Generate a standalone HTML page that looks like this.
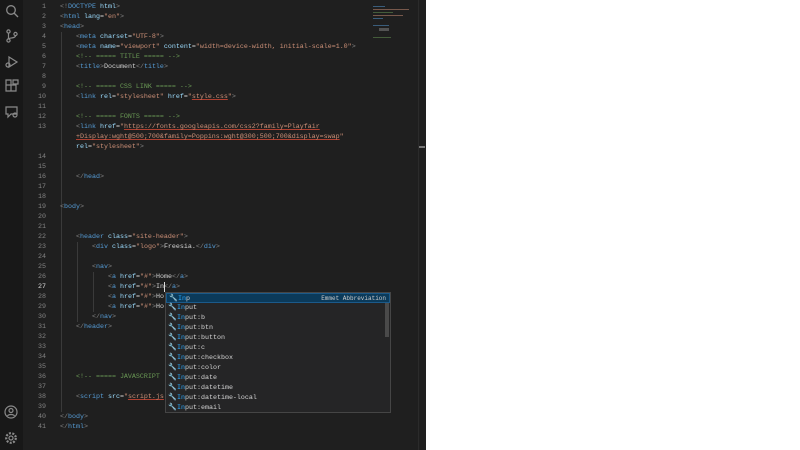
<!DOCTYPE html>
<html><head><meta charset="utf-8"><style>
*{margin:0;padding:0;box-sizing:border-box}
body{width:800px;height:450px;background:#1f1f1f;overflow:hidden;position:relative;font-family:"Liberation Mono",monospace;font-size:6.67px;color:#d4d4d4}
#side{position:absolute;left:0;top:0;width:23px;height:450px;background:#181818}
#right{position:absolute;left:426px;top:0;width:374px;height:450px;background:#fff}
#ln{position:absolute;left:22px;top:0;width:24px;text-align:right;color:#858585}
.l{position:absolute;height:10px;line-height:10px;white-space:pre;margin-top:1px}
.n{right:0}
.t{color:#569cd6}.p{color:#808080}.a{color:#9cdcfe}.s{color:#ce9178}.c{color:#6a9955}.w{color:#d4d4d4}
.u{text-decoration:underline;text-decoration-color:#b04030}
.g{position:absolute;width:1px;background:#3a3a3a}
#sug{position:absolute;left:165px;top:292px;width:226px;height:121px;background:#252526;border:1px solid #454545}
.si{position:absolute;left:0;width:216px;height:10px;line-height:10px;padding-left:11px;white-space:pre;color:#d4d4d4}
.si b{color:#2aaaff;font-weight:normal}
.ic{position:absolute;left:2px;top:1px;width:7px;height:8px;color:#c5c5c5;font-size:7px;line-height:8px}
svg{position:absolute}
</style></head><body>
<div id="side">
<svg style="left:5px;top:4px" width="14" height="14" viewBox="0 0 14 14" fill="none" stroke="#8a8a8a" stroke-width="1.3"><circle cx="6" cy="6" r="4.3"/><path d="M9 9l4 4"/></svg>
<svg style="left:5px;top:29px" width="14" height="14" viewBox="0 0 14 14" fill="none" stroke="#8a8a8a" stroke-width="1.2"><circle cx="3.5" cy="2.5" r="1.6"/><circle cx="3.5" cy="11.5" r="1.6"/><circle cx="10.5" cy="5" r="1.6"/><path d="M3.5 4v6M10.5 6.6c0 3-7 2-7 3.4"/></svg>
<svg style="left:5px;top:55px" width="14" height="14" viewBox="0 0 14 14" fill="none" stroke="#8a8a8a" stroke-width="1.2"><path d="M4 2l8 5-8 5z"/><circle cx="3" cy="10" r="2"/></svg>
<svg style="left:5px;top:79px" width="14" height="14" viewBox="0 0 14 14" fill="none" stroke="#8a8a8a" stroke-width="1.2"><path d="M1 6h5v6H1zM6 6h5v6H6zM1 1h5v5H1zM8 1h5v4H8z"/></svg>
<svg style="left:5px;top:105px" width="14" height="14" viewBox="0 0 14 14" fill="none" stroke="#8a8a8a" stroke-width="1.2"><path d="M1 2h11v7H6l-3 3V9H1z"/><circle cx="10" cy="10" r="2"/></svg>
<svg style="left:4px;top:405px" width="14" height="14" viewBox="0 0 14 14" fill="none" stroke="#8a8a8a" stroke-width="1.2"><circle cx="7" cy="7" r="6"/><circle cx="7" cy="5.5" r="2"/><path d="M3.5 11c1-2 6-2 7 0"/></svg>
<svg style="left:4px;top:431px" width="14" height="14" viewBox="0 0 14 14" fill="none" stroke="#8a8a8a" stroke-width="1.2"><circle cx="7" cy="7" r="2"/><circle cx="7" cy="7" r="4.8" stroke-dasharray="2 1.4" stroke-width="2.2"/></svg>
</div>
<div id="ln">
<div class="l n" style="top:1px">1</div><div class="l n" style="top:11px">2</div><div class="l n" style="top:21px">3</div><div class="l n" style="top:31px">4</div><div class="l n" style="top:41px">5</div><div class="l n" style="top:51px">6</div><div class="l n" style="top:61px">7</div><div class="l n" style="top:71px">8</div><div class="l n" style="top:81px">9</div><div class="l n" style="top:91px">10</div><div class="l n" style="top:101px">11</div><div class="l n" style="top:111px">12</div><div class="l n" style="top:121px">13</div>
<div class="l n" style="top:151px">14</div><div class="l n" style="top:161px">15</div><div class="l n" style="top:171px">16</div><div class="l n" style="top:181px">17</div><div class="l n" style="top:191px">18</div><div class="l n" style="top:201px">19</div><div class="l n" style="top:211px">20</div><div class="l n" style="top:221px">21</div><div class="l n" style="top:231px">22</div><div class="l n" style="top:241px">23</div><div class="l n" style="top:251px">24</div><div class="l n" style="top:261px">25</div><div class="l n" style="top:271px">26</div><div class="l n" style="top:281px;color:#ddd">27</div><div class="l n" style="top:291px">28</div><div class="l n" style="top:301px">29</div><div class="l n" style="top:311px">30</div><div class="l n" style="top:321px">31</div><div class="l n" style="top:331px">32</div><div class="l n" style="top:341px">33</div><div class="l n" style="top:351px">34</div><div class="l n" style="top:361px">35</div><div class="l n" style="top:371px">36</div><div class="l n" style="top:381px">37</div><div class="l n" style="top:391px">38</div><div class="l n" style="top:401px">39</div><div class="l n" style="top:411px">40</div><div class="l n" style="top:421px">41</div>
</div>
<div class="g" style="left:61px;top:32px;height:190px"></div>
<div class="g" style="left:61px;top:222px;height:190px"></div>
<div class="g" style="left:77px;top:242px;height:80px"></div>
<div class="g" style="left:93px;top:272px;height:40px"></div>
<div class="l" style="left:60px;top:1px"><span class="p">&lt;!</span><span class="t">DOCTYPE</span> <span class="a">html</span><span class="p">&gt;</span></div>
<div class="l" style="left:60px;top:11px"><span class="p">&lt;</span><span class="t">html</span> <span class="a">lang</span>=<span class="s">"en"</span><span class="p">&gt;</span></div>
<div class="l" style="left:60px;top:21px"><span class="p">&lt;</span><span class="t">head</span><span class="p">&gt;</span></div>
<div class="l" style="left:76px;top:31px"><span class="p">&lt;</span><span class="t">meta</span> <span class="a">charset</span>=<span class="s">"UTF-8"</span><span class="p">&gt;</span></div>
<div class="l" style="left:76px;top:41px"><span class="p">&lt;</span><span class="t">meta</span> <span class="a">name</span>=<span class="s">"viewport"</span> <span class="a">content</span>=<span class="s">"width=device-width, initial-scale=1.0"</span><span class="p">&gt;</span></div>
<div class="l c" style="left:76px;top:51px">&lt;!-- ===== TITLE ===== --&gt;</div>
<div class="l" style="left:76px;top:61px"><span class="p">&lt;</span><span class="t">title</span><span class="p">&gt;</span>Document<span class="p">&lt;/</span><span class="t">title</span><span class="p">&gt;</span></div>
<div class="l c" style="left:76px;top:81px">&lt;!-- ===== CSS LINK ===== --&gt;</div>
<div class="l" style="left:76px;top:91px"><span class="p">&lt;</span><span class="t">link</span> <span class="a">rel</span>=<span class="s">"stylesheet"</span> <span class="a">href</span>=<span class="s">"<span class="u">style.css</span>"</span><span class="p">&gt;</span></div>
<div class="l c" style="left:76px;top:111px">&lt;!-- ===== FONTS ===== --&gt;</div>
<div class="l" style="left:76px;top:121px"><span class="p">&lt;</span><span class="t">link</span> <span class="a">href</span>=<span class="s">"<span class="u">https://fonts.googleapis.com/css2?family=Playfair</span></span></div>
<div class="l s" style="left:76px;top:131px"><span class="u">+Display:wght@500;700&amp;family=Poppins:wght@300;500;700&amp;display=swap</span>"</div>
<div class="l" style="left:76px;top:141px"><span class="a">rel</span>=<span class="s">"stylesheet"</span><span class="p">&gt;</span></div>
<div class="l" style="left:76px;top:171px"><span class="p">&lt;/</span><span class="t">head</span><span class="p">&gt;</span></div>
<div class="l" style="left:60px;top:201px"><span class="p">&lt;</span><span class="t">body</span><span class="p">&gt;</span></div>
<div class="l" style="left:76px;top:231px"><span class="p">&lt;</span><span class="t">header</span> <span class="a">class</span>=<span class="s">"site-header"</span><span class="p">&gt;</span></div>
<div class="l" style="left:92px;top:241px"><span class="p">&lt;</span><span class="t">div</span> <span class="a">class</span>=<span class="s">"logo"</span><span class="p">&gt;</span>Freesia.<span class="p">&lt;/</span><span class="t">div</span><span class="p">&gt;</span></div>
<div class="l" style="left:92px;top:261px"><span class="p">&lt;</span><span class="t">nav</span><span class="p">&gt;</span></div>
<div class="l" style="left:108px;top:271px"><span class="p">&lt;</span><span class="t">a</span> <span class="a">href</span>=<span class="s">"#"</span><span class="p">&gt;</span>Home<span class="p">&lt;/</span><span class="t">a</span><span class="p">&gt;</span></div>
<div class="l" style="left:108px;top:281px"><span class="p">&lt;</span><span class="t">a</span> <span class="a">href</span>=<span class="s">"#"</span><span class="p">&gt;</span>In<span class="p">&lt;/</span><span class="t">a</span><span class="p">&gt;</span></div>
<div class="l" style="left:108px;top:291px"><span class="p">&lt;</span><span class="t">a</span> <span class="a">href</span>=<span class="s">"#"</span><span class="p">&gt;</span>Ho</div>
<div class="l" style="left:108px;top:301px"><span class="p">&lt;</span><span class="t">a</span> <span class="a">href</span>=<span class="s">"#"</span><span class="p">&gt;</span>Ho</div>
<div class="l" style="left:92px;top:311px"><span class="p">&lt;/</span><span class="t">nav</span><span class="p">&gt;</span></div>
<div class="l" style="left:76px;top:321px"><span class="p">&lt;/</span><span class="t">header</span><span class="p">&gt;</span></div>
<div class="l c" style="left:76px;top:371px">&lt;!-- ===== JAVASCRIPT</div>
<div class="l" style="left:76px;top:391px"><span class="p">&lt;</span><span class="t">script</span> <span class="a">src</span>=<span class="s">"<span class="u">script.js</span></span></div>
<div class="l" style="left:60px;top:411px"><span class="p">&lt;/</span><span class="t">body</span><span class="p">&gt;</span></div>
<div class="l" style="left:60px;top:421px"><span class="p">&lt;/</span><span class="t">html</span><span class="p">&gt;</span></div>
<div style="position:absolute;left:373px;top:4px;width:40px;height:50px;opacity:.5">
<div style="height:1px;margin:2px 0;width:12px;background:#569cd6"></div><div style="height:1px;margin:2px 0;width:36px;background:#ce9178"></div><div style="height:1px;margin:2px 0;width:20px;background:#6a9955"></div><div style="height:1px;margin:2px 0;width:30px;background:#ce9178"></div><div style="height:1px;margin:2px 0;width:10px;background:#569cd6"></div><div style="height:1px;margin:6px 0 2px;width:16px;background:#569cd6"></div><div style="height:3px;margin:2px 0 2px 6px;width:10px;background:#888"></div><div style="height:1px;margin:6px 0 2px;width:18px;background:#6a9955"></div>
</div>
<div style="position:absolute;left:418px;top:0;width:1px;height:450px;background:#2b2b2b"></div>
<div style="position:absolute;left:419px;top:146px;width:6px;height:2px;background:#777"></div>
<div id="right"></div>
<div style="position:absolute;left:164px;top:282px;width:1px;height:10px;background:#ddd"></div>
<div id="sug">
<div class="si" style="top:0;width:224px;background:#0b3a5a;border:1px solid #1b5a8a"><span class="ic">&#128295;</span><b>In</b>p<span style="position:absolute;right:3px;font-size:6px;color:#ccc">Emmet Abbreviation</span></div>
<div class="si" style="top:10px"><span class="ic">&#128295;</span><b>In</b>put</div>
<div class="si" style="top:20px"><span class="ic">&#128295;</span><b>In</b>put:b</div>
<div class="si" style="top:30px"><span class="ic">&#128295;</span><b>In</b>put:btn</div>
<div class="si" style="top:40px"><span class="ic">&#128295;</span><b>In</b>put:button</div>
<div class="si" style="top:50px"><span class="ic">&#128295;</span><b>In</b>put:c</div>
<div class="si" style="top:60px"><span class="ic">&#128295;</span><b>In</b>put:checkbox</div>
<div class="si" style="top:70px"><span class="ic">&#128295;</span><b>In</b>put:color</div>
<div class="si" style="top:80px"><span class="ic">&#128295;</span><b>In</b>put:date</div>
<div class="si" style="top:90px"><span class="ic">&#128295;</span><b>In</b>put:datetime</div>
<div class="si" style="top:100px"><span class="ic">&#128295;</span><b>In</b>put:datetime-local</div>
<div class="si" style="top:110px"><span class="ic">&#128295;</span><b>In</b>put:email</div>
<div style="position:absolute;right:1px;top:10px;width:4px;height:34px;background:#4a4a4a"></div>
</div>
</body></html>
